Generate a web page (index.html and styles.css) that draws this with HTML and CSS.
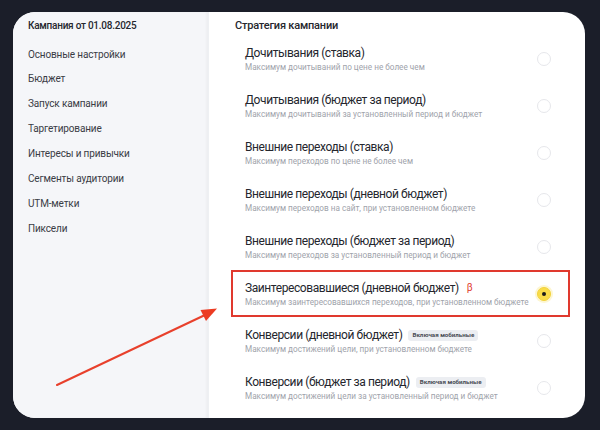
FILE: index.html
```html
<!DOCTYPE html>
<html lang="ru">
<head>
<meta charset="utf-8">
<link rel="stylesheet" href="styles.css">
</head>
<body>
<div class="card">
  <aside class="sidebar">
    <div class="side-title">Кампания от 01.08.2025</div>
    <nav class="menu">
      <div class="menu-item">Основные настройки</div>
      <div class="menu-item">Бюджет</div>
      <div class="menu-item">Запуск кампании</div>
      <div class="menu-item">Таргетирование</div>
      <div class="menu-item">Интересы и привычки</div>
      <div class="menu-item">Сегменты аудитории</div>
      <div class="menu-item">UTM-метки</div>
      <div class="menu-item">Пиксели</div>
    </nav>
  </aside>
  <main class="content">
    <div class="heading">Стратегия кампании</div>
    <div class="row">
      <div class="text"><div class="title">Дочитывания (ставка)</div><div class="sub">Максимум дочитываний по цене не более чем</div></div>
      <span class="radio"></span>
    </div>
    <div class="row">
      <div class="text"><div class="title">Дочитывания (бюджет за период)</div><div class="sub">Максимум дочитываний за установленный период и бюджет</div></div>
      <span class="radio"></span>
    </div>
    <div class="row">
      <div class="text"><div class="title">Внешние переходы (ставка)</div><div class="sub">Максимум переходов по цене не более чем</div></div>
      <span class="radio"></span>
    </div>
    <div class="row">
      <div class="text"><div class="title">Внешние переходы (дневной бюджет)</div><div class="sub">Максимум переходов на сайт, при установленном бюджете</div></div>
      <span class="radio"></span>
    </div>
    <div class="row">
      <div class="text"><div class="title">Внешние переходы (бюджет за период)</div><div class="sub">Максимум переходов за установленный период и бюджет</div></div>
      <span class="radio"></span>
    </div>
    <div class="row row-marked">
      <div class="text"><div class="title">Заинтересовавшиеся (дневной бюджет)<span class="beta">β</span></div><div class="sub">Максимум заинтересовавшихся переходов, при установленном бюджете</div></div>
      <span class="radio radio-on"></span>
    </div>
    <div class="row">
      <div class="text"><div class="title">Конверсии (дневной бюджет)<span class="badge">Включая мобильные</span></div><div class="sub">Максимум достижений цели, при установленном бюджете</div></div>
      <span class="radio"></span>
    </div>
    <div class="row">
      <div class="text"><div class="title">Конверсии (бюджет за период)<span class="badge">Включая мобильные</span></div><div class="sub">Максимум достижений цели за установленный период и бюджет</div></div>
      <span class="radio"></span>
    </div>
  </main>
</div>
<svg class="arrow" width="600" height="430" viewBox="0 0 600 430">
  <line x1="57" y1="385" x2="205" y2="315" stroke="#e8402c" stroke-width="2" stroke-linecap="round"/>
  <polygon points="217,308.5 206,321 200.5,310" fill="#ec3b22"/>
</svg>
</body>
</html>
```
FILE: styles.css
```css
* { box-sizing: border-box; }
html, body { margin: 0; padding: 0; }
body {
  width: 600px;
  height: 430px;
  background: #1b1e29;
  font-family: Roboto, "Noto Sans", sans-serif;
  padding: 12px 15px 12px 13px;
  overflow: hidden;
}
.card {
  display: flex;
  width: 572px;
  height: 406px;
  border-radius: 22px;
  overflow: hidden;
  background: #fff;
}
.sidebar {
  width: 196px;
  flex: none;
  background: #f5f6f9;
  padding: 6px 0 0 15px;
  box-shadow: inset -2px 0 2px rgba(0,0,0,0.03);
  border-right: 1px solid #eef0f3;
}
.side-title {
  font-size: 10px;
  font-weight: 500;
  line-height: 16px;
  letter-spacing: -0.25px;
  color: #25272e;
}
.menu { margin-top: 8.5px; }
.menu-item {
  font-size: 10px;
  line-height: 24.9px;
  letter-spacing: -0.15px;
  color: #3a3c45;
}
.content {
  flex: 1;
  padding: 6px 15px 0 22px;
}
.heading {
  font-size: 11px;
  font-weight: 500;
  line-height: 16px;
  letter-spacing: -0.2px;
  color: #25272e;
  padding-left: 4px;
  margin-bottom: 0.5px;
}
.row {
  height: 47px;
  display: flex;
  align-items: center;
  justify-content: space-between;
  padding: 2px 19px 0 14px;
}
.row-marked {
  outline: 2px solid #e0392e;
  outline-offset: -2px;
}
.title {
  font-size: 12px;
  line-height: 16px;
  letter-spacing: -0.42px;
  color: #24262d;
  display: flex;
  align-items: center;
  white-space: nowrap;
}
.sub {
  font-size: 8.2px;
  line-height: 12px;
  color: #a0a3ab;
  white-space: nowrap;
}
.beta {
  color: #e0392e;
  font-size: 10px;
  margin-left: 8px;
}
.badge {
  margin-left: 6px;
  background: #eceef2;
  color: #4a4d55;
  font-size: 6.2px;
  font-weight: 700;
  line-height: 11px;
  letter-spacing: 0;
  padding: 0 4px;
  border-radius: 3px;
}
.radio {
  width: 14px;
  height: 14px;
  flex: none;
  border-radius: 50%;
  border: 1px solid #e6e7eb;
  background: #fff;
}
.radio-on {
  background: #f9dc48;
  border-color: #f3d23c;
  box-shadow: 0 0 0 2px rgba(249,220,72,0.25);
  display: flex;
  align-items: center;
  justify-content: center;
}
.radio-on::after {
  content: "";
  width: 4px;
  height: 4px;
  border-radius: 50%;
  background: #1a1a1a;
}
.arrow {
  position: absolute;
  left: 0;
  top: 0;
  pointer-events: none;
}
```
